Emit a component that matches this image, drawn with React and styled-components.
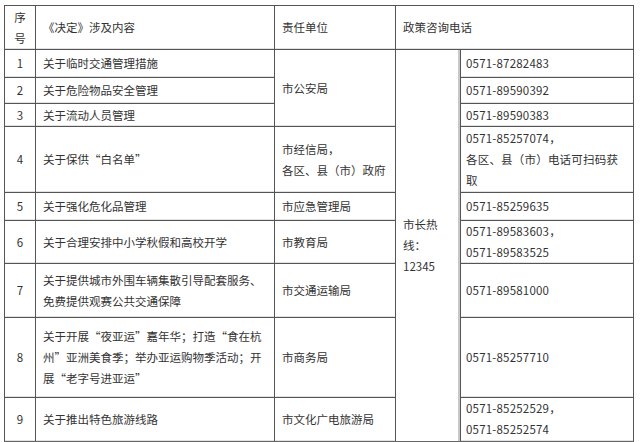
import styled, { createGlobalStyle } from "styled-components";

const GlobalStyle = createGlobalStyle`
  body {
    margin: 0;
    background: #fff;
    font-family: "Noto Sans CJK SC", "Noto Sans", sans-serif;
    color: #333;
  }
`;

const rows = [
  { no: 1, h: 28, content: ["关于临时交通管理措施"], phone: ["0571-87282483"] },
  { no: 2, h: 26, content: ["关于危险物品安全管理"], phone: ["0571-89590392"] },
  { no: 3, h: 23, content: ["关于流动人员管理"], phone: ["0571-89590383"] },
  {
    no: 4,
    h: 66,
    content: ["关于保供“白名单”"],
    unit: ["市经信局，", "各区、县（市）政府"],
    phone: ["0571-85257074，", "各区、县（市）电话可扫码获取"],
  },
  { no: 5, h: 28, content: ["关于强化危化品管理"], unit: ["市应急管理局"], phone: ["0571-85259635"] },
  {
    no: 6,
    h: 42,
    content: ["关于合理安排中小学秋假和高校开学"],
    unit: ["市教育局"],
    phone: ["0571-89583603，", "0571-89583525"],
  },
  {
    no: 7,
    h: 54,
    content: ["关于提供城市外围车辆集散引导配套服务、", "免费提供观赛公共交通保障"],
    unit: ["市交通运输局"],
    phone: ["0571-89581000"],
  },
  {
    no: 8,
    h: 80,
    content: ["关于开展“夜亚运”嘉年华；打造“食在杭", "州”亚洲美食季；举办亚运购物季活动；开", "展“老字号进亚运”"],
    unit: ["市商务局"],
    phone: ["0571-85257710"],
  },
  {
    no: 9,
    h: 44,
    content: ["关于推出特色旅游线路"],
    unit: ["市文化广电旅游局"],
    phone: ["0571-85252529，", "0571-85252574"],
  },
];

function Lines({ items }) {
  return items.map((t, i) => (
    <span key={i}>
      {i > 0 && <br />}
      {t}
    </span>
  ));
}

export default function App() {
  return (
    <>
      <GlobalStyle />
      <Page>
        <Table>
          <colgroup>
            <col style={{ width: 31 }} />
            <col style={{ width: 239 }} />
            <col style={{ width: 121 }} />
            <col style={{ width: 65 }} />
            <col style={{ width: 173 }} />
          </colgroup>
          <tbody>
            <Row h={44}>
              <NoCell>序号</NoCell>
              <Cell>《决定》涉及内容</Cell>
              <Cell>责任单位</Cell>
              <Cell colSpan={2}>政策咨询电话</Cell>
            </Row>
            {rows.map((r, i) => (
              <Row key={r.no} h={r.h}>
                <NoCell>{r.no}</NoCell>
                <Cell>
                  <Lines items={r.content} />
                </Cell>
                {i === 0 && <Cell rowSpan={3}>市公安局</Cell>}
                {r.unit && (
                  <Cell>
                    <Lines items={r.unit} />
                  </Cell>
                )}
                {i === 0 && <HotlineCell rowSpan={rows.length}>市长热线：12345</HotlineCell>}
                <PhoneCell>
                  <Lines items={r.phone} />
                </PhoneCell>
              </Row>
            ))}
          </tbody>
        </Table>
      </Page>
    </>
  );
}

const Page = styled.div`
  padding: 5px 0 0 4px;
`;

const Table = styled.table`
  border-collapse: collapse;
  table-layout: fixed;
  width: 629px;
  font-size: 11.5px;
  line-height: 21px;
  color: #333;
  border-bottom: 2px solid #666;
`;

const Row = styled.tr`
  height: ${(p) => p.h}px;
`;

const Cell = styled.td`
  border: 1px solid #555;
  padding: 0 7px 0 7px;
  vertical-align: middle;
  text-align: left;
  box-shadow: inset 0 -1px 0 #e2e2e2;
`;

const NoCell = styled(Cell)`
  text-align: center;
  padding: 0 6px;
`;

const HotlineCell = styled(Cell)`
  padding: 0 20px 0 7px;
  box-shadow: inset -2px 0 0 #c8c8c8;
`;

const PhoneCell = styled(Cell)`
  padding: 0 8px 0 5px;
  letter-spacing: 0.2px;
`;
